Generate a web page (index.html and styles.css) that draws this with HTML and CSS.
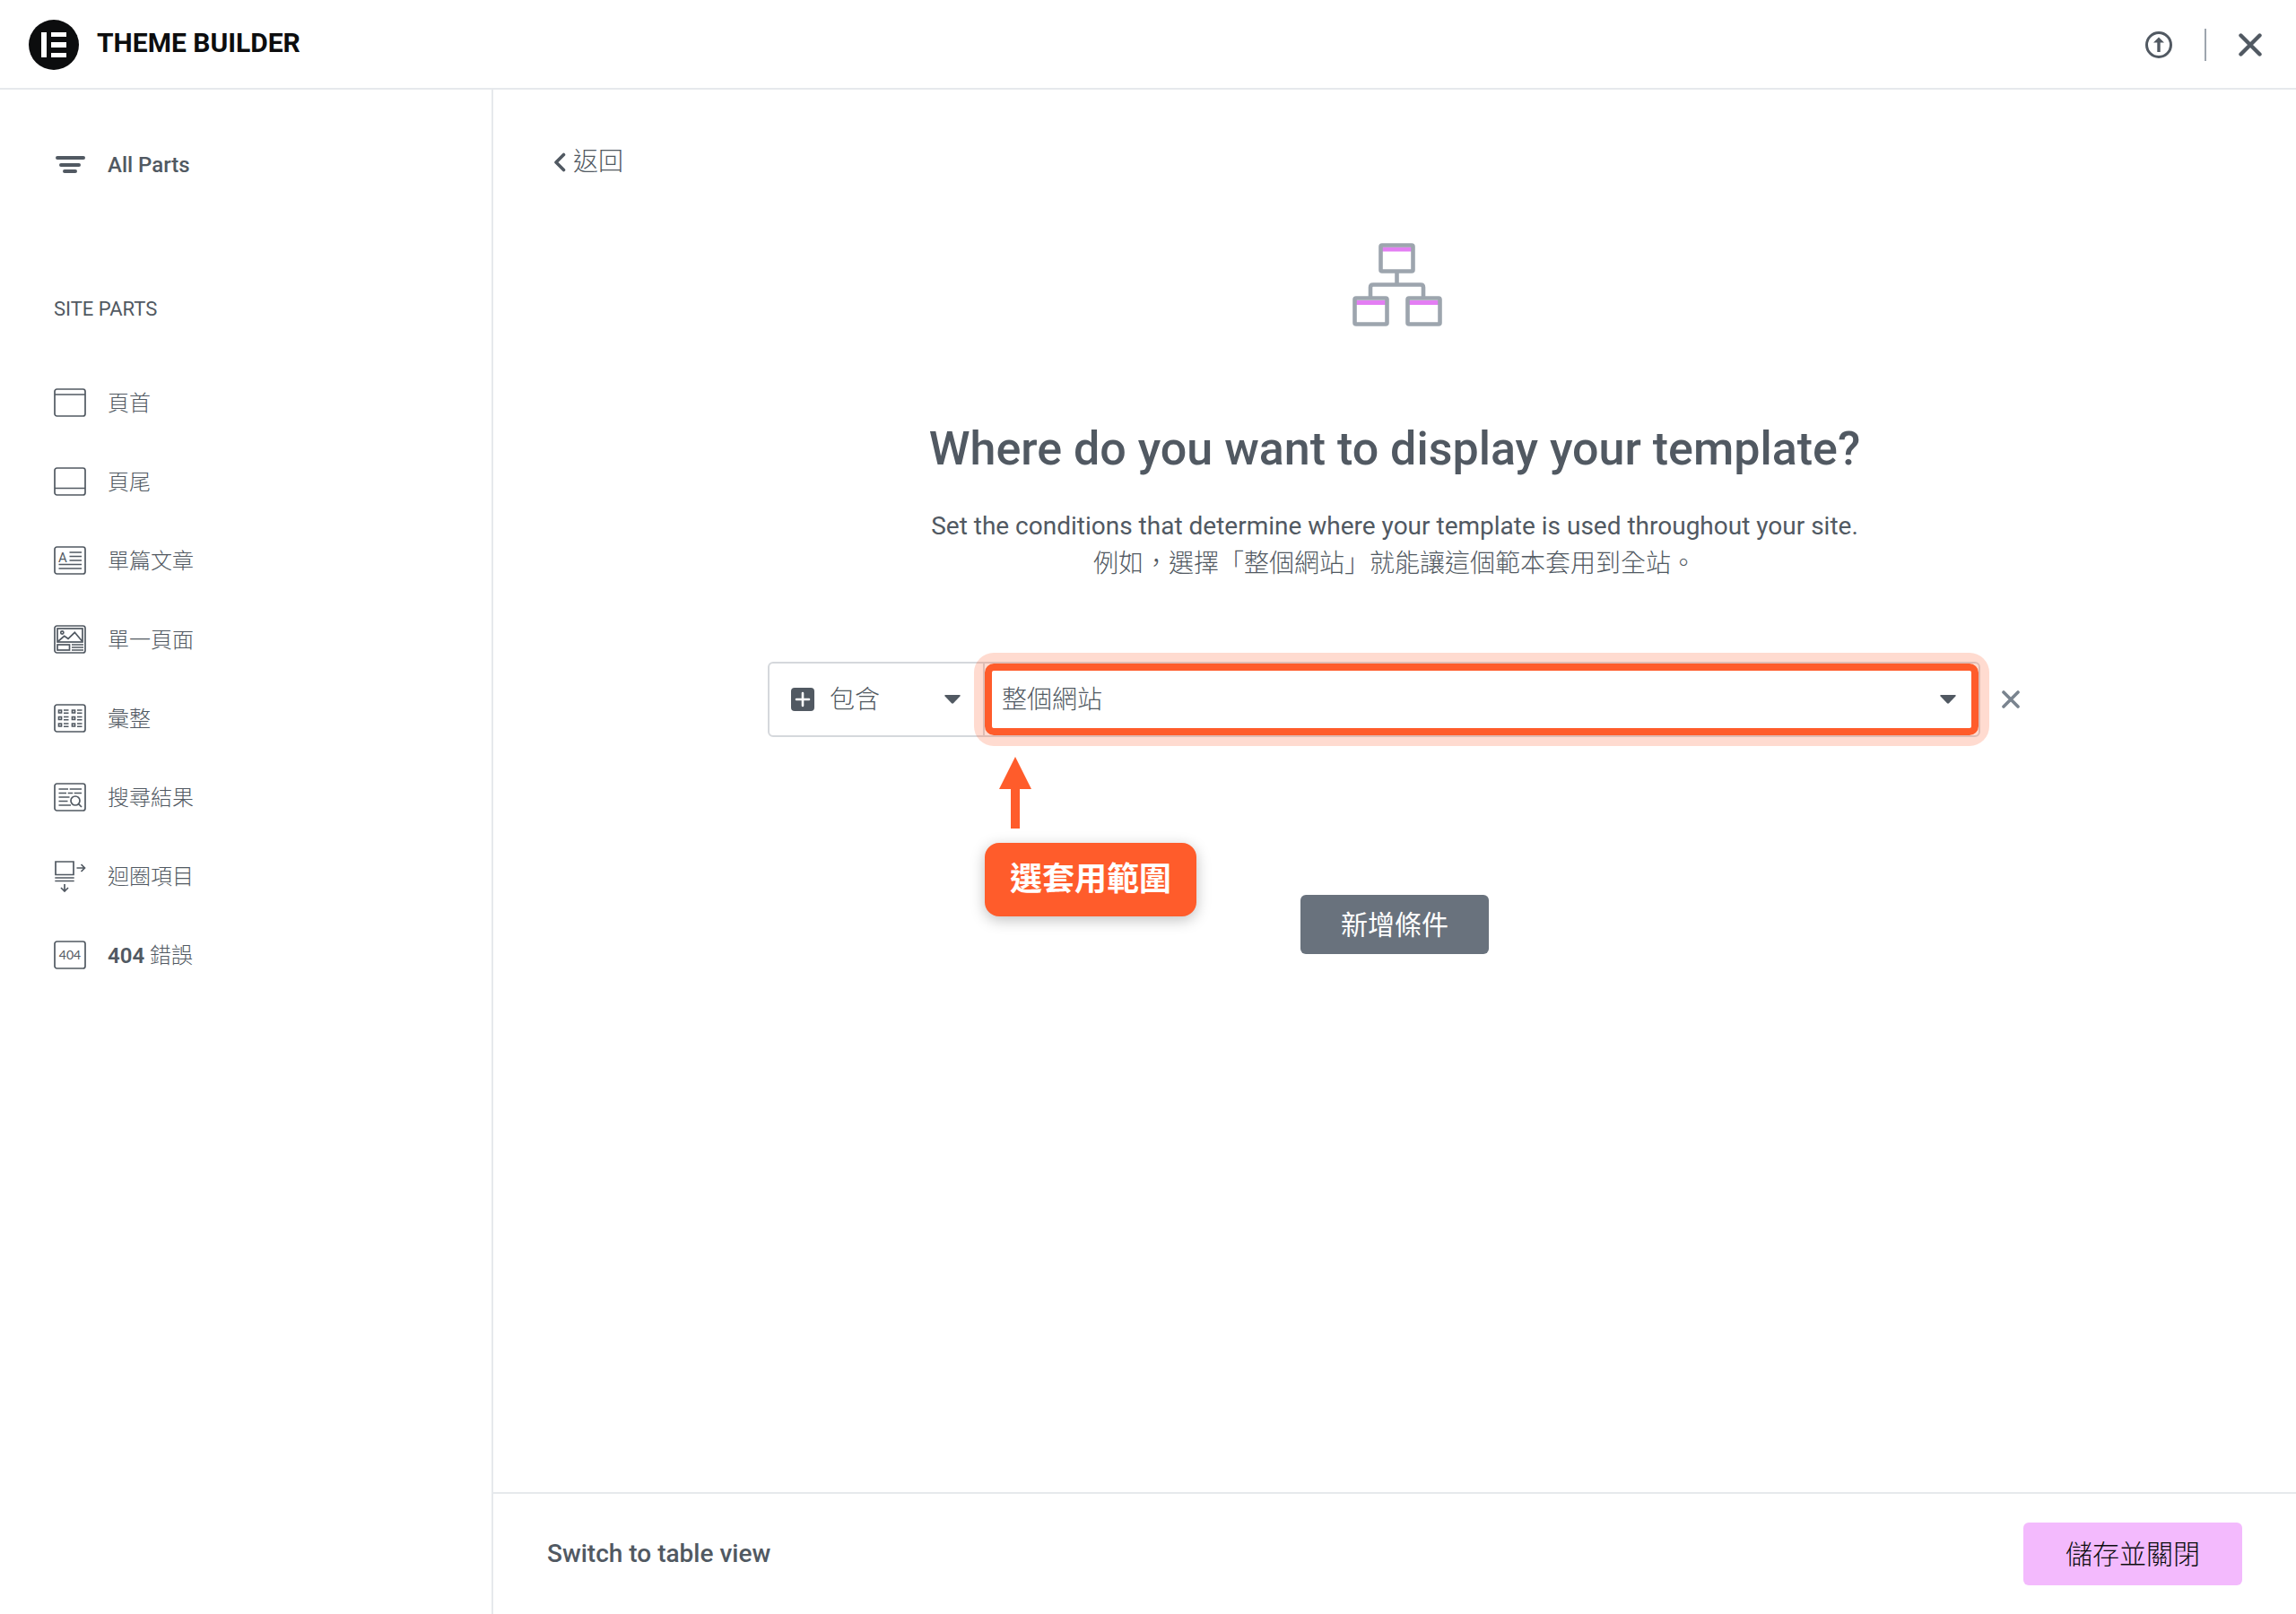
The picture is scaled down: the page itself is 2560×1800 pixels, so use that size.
FILE: index.html
```html
<!DOCTYPE html>
<html lang="zh-Hant">
<head>
<meta charset="utf-8">
<meta name="viewport" content="width=device-width, initial-scale=1">
<title>Theme Builder</title>
<link rel="stylesheet" href="styles.css">
</head>
<body>
<header class="topbar">
  <a class="brand" href="#">
    <svg class="brand-logo" viewBox="0 0 56 56" aria-hidden="true">
      <circle cx="28" cy="28" r="28" fill="#0c0d0e"/>
      <path d="M14 14h6v28h-6zM25 14h17v5H25zM25 25h17v6H25zM25 37h17v5H25z" fill="#fff"/>
    </svg>
    <h1 class="brand-title">THEME BUILDER</h1>
  </a>
  <div class="topbar-actions">
    <button class="icon-button" type="button" aria-label="Import">
      <svg width="30" height="30" viewBox="0 0 30 30" aria-hidden="true">
        <circle cx="15" cy="15" r="13.500" fill="none" stroke="#515962" stroke-width="3"/>
        <path d="M15 6.500 21 12.500h-4.300v10.500h-3.400V12.500H9z" fill="#515962"/>
      </svg>
    </button>
    <span class="divider"></span>
    <button class="icon-button" type="button" aria-label="Close">
      <svg width="26" height="26" viewBox="0 0 26 26" aria-hidden="true">
        <path d="M2.500 2.500l21 21M23.500 2.500l-21 21" stroke="#515962" stroke-width="4.400" stroke-linecap="round"/>
      </svg>
    </button>
  </div>
</header>

<div class="workspace">
  <nav class="sidebar" aria-label="Site parts">
    <a class="nav-link" href="#">
      <svg class="nav-icon" viewBox="0 0 36 32" aria-hidden="true">
        <path d="M4 8h29M8 16h20M12 23h12" stroke="#515962" stroke-width="4" stroke-linecap="round"/>
      </svg>
      <span>All Parts</span>
    </a>
    <h2 class="nav-heading">SITE PARTS</h2>
    <ul class="nav-list">
      <li><a class="nav-link" href="#">
        <svg class="nav-icon line-icon" viewBox="0 0 36 32" aria-hidden="true"><rect x="1" y="1" width="34" height="30" rx="2.500"/><path d="M1 7h34"/></svg>
        <span>頁首</span></a></li>
      <li><a class="nav-link" href="#">
        <svg class="nav-icon line-icon" viewBox="0 0 36 32" aria-hidden="true"><rect x="1" y="1" width="34" height="30" rx="2.500"/><path d="M1 23.500h34"/></svg>
        <span>頁尾</span></a></li>
      <li><a class="nav-link" href="#">
        <svg class="nav-icon line-icon" viewBox="0 0 36 32" aria-hidden="true"><rect x="1" y="1" width="34" height="30" rx="2.500"/><path d="M17.500 7h13.500M17.500 11.500h13.500M17.500 16h13.500M5.500 20.500h25.500M5.500 25h25.500"/><text class="icon-letter" x="5" y="18">A</text></svg>
        <span>單篇文章</span></a></li>
      <li><a class="nav-link" href="#">
        <svg class="nav-icon line-icon" viewBox="0 0 36 32" aria-hidden="true"><rect x="1" y="1" width="34" height="30" rx="2.500"/><rect x="4" y="4" width="28" height="15"/><circle cx="9.300" cy="8.500" r="1.600"/><path d="M4.500 18.500l7.200-6.200 4.300 3 7.300-7 8.200 9.700"/><rect x="4" y="22" width="13.500" height="6"/><path d="M20 22h13M20 25h13M20 28h13"/></svg>
        <span>單一頁面</span></a></li>
      <li><a class="nav-link" href="#">
        <svg class="nav-icon line-icon" viewBox="0 0 36 32" aria-hidden="true"><rect x="1" y="1" width="34" height="30" rx="2.500"/><path d="M5.500 7h3v3h-3zM5.500 14.500h3v3h-3zM5.500 22h3v3h-3zM20.500 7h3v3h-3zM20.500 14.500h3v3h-3zM20.500 22h3v3h-3z"/><path d="M11 7h5.500M11 10.300h5.500M11 14.500h5.500M11 17.800h5.500M11 22h5.500M11 25.300h5.500M26 7h5.500M26 10.300h5.500M26 14.500h5.500M26 17.800h5.500M26 22h5.500M26 25.300h5.500" stroke-width="1.400"/></svg>
        <span>彙整</span></a></li>
      <li><a class="nav-link" href="#">
        <svg class="nav-icon line-icon" viewBox="0 0 36 32" aria-hidden="true"><rect x="1" y="1" width="34" height="30" rx="2.500"/><path d="M5.500 7H16M17.700 7H31M5.500 11.500h8.500M15.700 11.500h5.500M22.700 11.500H31M5.500 16h12M5.500 20.500h10M5.500 25h13.500"/><circle cx="24" cy="20" r="5"/><path d="M27.600 23.600l3.400 3.400"/></svg>
        <span>搜尋結果</span></a></li>
      <li><a class="nav-link" href="#">
        <svg class="nav-icon nav-icon-tall line-icon" viewBox="0 0 36 36" aria-hidden="true"><path d="M2 2h20v14.500H2zM1.300 20h21.400M1.300 23.500h21.400M25.500 9H34M30.500 5l4 4-4 4M12 27v8M8 31l4 4 4-4"/></svg>
        <span>迴圈項目</span></a></li>
      <li><a class="nav-link" href="#">
        <svg class="nav-icon line-icon" viewBox="0 0 36 32" aria-hidden="true"><rect x="1" y="1" width="34" height="30" rx="2.500"/><text class="icon-code" x="18" y="21">404</text></svg>
        <span><strong class="nav-code">404</strong> 錯誤</span></a></li>
    </ul>
  </nav>

  <main class="content">
    <div class="conditions">
      <a class="back-link" href="#">
        <svg width="14" height="22" viewBox="0 0 14 22" aria-hidden="true"><path d="M11.500 2.500 3 11l8.500 8.500" fill="none" stroke="#515962" stroke-width="3.600" stroke-linecap="round" stroke-linejoin="round"/></svg>
        <span>返回</span>
      </a>
      <svg class="hero-icon" viewBox="0 0 106 93" aria-hidden="true">
        <g transform="translate(6 0)">
          <path d="M33 4.500h33v5H33zM4 64h33v5H4zM63 64h33v5H63z" fill="#e37ef3"/>
          <g fill="none" stroke="#9da5ae" stroke-width="4.600">
            <rect x="31.500" y="2.500" width="36" height="29" rx="1.500"/>
            <rect x="2.500" y="61.500" width="36" height="29" rx="1.500"/>
            <rect x="61.500" y="61.500" width="36" height="29" rx="1.500"/>
            <path d="M49.500 32v15M20 61V49.500q0-3 3-3h53q3 0 3 3V61"/>
          </g>
        </g>
      </svg>
      <h2 class="title">Where do you want to display your template?</h2>
      <p class="lead">Set the conditions that determine where your template is used throughout your site.<br><span class="lead-example">例如，選擇「整個網站」就能讓這個範本套用到全站。</span></p>

      <div class="rule-row">
        <div class="rule">
          <div class="field field-type">
            <svg class="field-plus" width="26" height="26" viewBox="0 0 26 26" aria-hidden="true"><rect width="26" height="26" rx="4" fill="#515962"/><path d="M13 6v14M6 13h14" stroke="#fff" stroke-width="2.600" stroke-linecap="round"/></svg>
            <select class="select" aria-label="條件類型"><option>包含</option></select>
            <svg class="caret" width="18" height="10" viewBox="0 0 18 10" aria-hidden="true"><path d="M1 0h16q1.200.400.400 1.500L10 9.300q-1 .900-2 0L.600 1.500Q-.200.400 1 0z" fill="#515962"/></svg>
          </div>
          <div class="field field-scope">
            <select class="select" aria-label="套用範圍"><option>整個網站</option></select>
            <svg class="caret" width="18" height="10" viewBox="0 0 18 10" aria-hidden="true"><path d="M1 0h16q1.200.400.400 1.500L10 9.300q-1 .900-2 0L.600 1.500Q-.200.400 1 0z" fill="#515962"/></svg>
            <div class="highlight"></div>
            <div class="callout">
              <svg class="callout-arrow" width="36" height="80" viewBox="0 0 36 80" aria-hidden="true"><path d="M18 0l18 36H23v44H13V36H0z" fill="#ff5c2b"/></svg>
              <span class="callout-label">選套用範圍</span>
            </div>
          </div>
        </div>
        <button class="icon-button" type="button" aria-label="移除條件">
          <svg width="22" height="22" viewBox="0 0 22 22" aria-hidden="true"><path d="M2 3l16 16M18 3l-16 16" stroke="#7a848f" stroke-width="3.600" stroke-linecap="round"/></svg>
        </button>
      </div>
      <button class="button button-add" type="button">新增條件</button>
    </div>

    <footer class="actions">
      <a class="table-link" href="#">Switch to table view</a>
      <button class="button button-save" type="button">儲存並關閉</button>
    </footer>
  </main>
</div>
</body>
</html>
```
FILE: styles.css
```css
* {
  box-sizing: border-box;
}

body {
  margin: 0;
  min-height: 100vh;
  display: flex;
  flex-direction: column;
  background: #fff;
  color: #515962;
  font-family: Roboto, "Noto Sans CJK TC", sans-serif;
  font-size: 28px;
  font-weight: 400;
}

a {
  color: inherit;
  text-decoration: none;
}

button,
select {
  font: inherit;
  color: inherit;
}

svg {
  display: block;
  flex: none;
}

.topbar {
  display: flex;
  align-items: center;
  justify-content: space-between;
  height: 100px;
  padding: 2px 38px 0 32px;
  border-bottom: 2px solid #e6e9ec;
}

.brand {
  display: flex;
  align-items: center;
  gap: 20px;
  color: #0c0d0e;
}

.brand-logo {
  width: 56px;
  height: 56px;
}

.brand-title {
  margin: 0;
  padding-bottom: 4px;
  font-size: 30px;
  line-height: 36px;
  font-weight: 700;
}

.topbar-actions {
  display: flex;
  align-items: center;
  gap: 36px;
}

.icon-button {
  padding: 0;
  border: 0;
  background: none;
  cursor: pointer;
}

.divider {
  width: 2px;
  height: 36px;
  background: #9da5ae;
}

.workspace {
  flex: 1;
  display: flex;
}

.sidebar {
  flex: none;
  width: 550px;
  padding: 40px 60px;
  border-right: 2px solid #e6e9ec;
}

.nav-link {
  display: flex;
  align-items: center;
  gap: 24px;
  height: 88px;
  font-size: 24px;
  font-weight: 500;
}

.nav-icon {
  width: 36px;
  height: 32px;
}

.nav-icon-tall {
  height: 36px;
}

.line-icon {
  fill: none;
  stroke: #515962;
  stroke-width: 1.700;
}

.icon-letter,
.icon-code {
  fill: #515962;
  stroke: none;
}

.icon-letter {
  font-size: 15px;
  font-weight: 400;
}

.icon-code {
  font-family: Lato, sans-serif;
  font-size: 14px;
  font-weight: 400;
  text-anchor: middle;
}

.nav-heading {
  margin: 101px 0 44px;
  font-size: 22px;
  line-height: 32px;
  font-weight: 400;
}

.nav-list {
  margin: 0;
  padding: 0;
  list-style: none;
}

.nav-list .nav-link {
  font-weight: 300;
}

.nav-list .nav-link span {
  padding-bottom: 4px;
}

.nav-code {
  font-weight: 600;
}

.content {
  flex: 1;
  display: flex;
  flex-direction: column;
}

.conditions {
  flex: 1;
  display: flex;
  flex-direction: column;
  align-items: center;
  padding: 61px 60px;
}

.back-link {
  align-self: flex-start;
  display: flex;
  align-items: center;
  gap: 8px;
  padding-left: 7px;
  line-height: 40px;
  font-weight: 300;
}

.hero-icon {
  width: 106px;
  height: 93px;
  margin-top: 70px;
}

.title {
  margin: 105px 0 0;
  font-size: 52px;
  line-height: 64px;
  font-weight: 500;
  text-align: center;
}

.lead {
  margin: 33px 0 0;
  line-height: 42px;
  text-align: center;
}

.lead-example {
  font-weight: 300;
}

.rule-row {
  display: flex;
  align-items: center;
  gap: 24px;
  width: 100%;
  max-width: 1398px;
  margin-top: 88px;
}

.rule {
  flex: 1;
  display: flex;
  height: 84px;
  border: 2px solid #d5d8dc;
  border-radius: 6px;
}

.field {
  position: relative;
  display: flex;
  align-items: center;
}

.field-type {
  flex: none;
  width: 240px;
  border-right: 2px solid #d5d8dc;
}

.field-scope {
  flex: 1;
}

.field-plus,
.caret {
  position: absolute;
  pointer-events: none;
}

.field-plus {
  left: 24px;
}

.caret {
  right: 25px;
}

.select {
  width: 100%;
  height: 100%;
  padding: 0 60px 0 19px;
  border: 0;
  background: none;
  appearance: none;
  font-weight: 300;
}

.field-type .select {
  padding-left: 67px;
}

.highlight {
  position: absolute;
  inset: 0;
  border: 8px solid #ff5c2b;
  border-radius: 10px;
  box-shadow: 0 0 0 12px rgba(255, 92, 43, 0.22);
  pointer-events: none;
}

.callout {
  position: absolute;
  top: 104px;
  left: 0;
}

.callout-arrow {
  margin: 0 0 16px 16px;
}

.callout-label {
  display: block;
  padding: 0 28px;
  border-radius: 16px;
  background: #ff5c2b;
  box-shadow: 0 4px 16px rgba(0, 0, 0, 0.25);
  color: #fff;
  font-size: 36px;
  line-height: 82px;
  font-weight: 700;
  white-space: nowrap;
}

.button {
  border: 0;
  border-radius: 6px;
  font-size: 30px;
  font-weight: 300;
  cursor: pointer;
}

.button-add {
  height: 66px;
  margin-top: 176px;
  padding: 0 45px 4px;
  background: #69727d;
  color: #fff;
  font-weight: 400;
}

.actions {
  display: flex;
  align-items: center;
  justify-content: space-between;
  height: 136px;
  padding: 0 60px;
  border-top: 2px solid #e6e9ec;
}

.table-link {
  padding-bottom: 2px;
  font-weight: 500;
}

.button-save {
  height: 70px;
  padding: 0 47px 4px;
  background: #f3bafd;
  color: #0c0d0e;
}
```
